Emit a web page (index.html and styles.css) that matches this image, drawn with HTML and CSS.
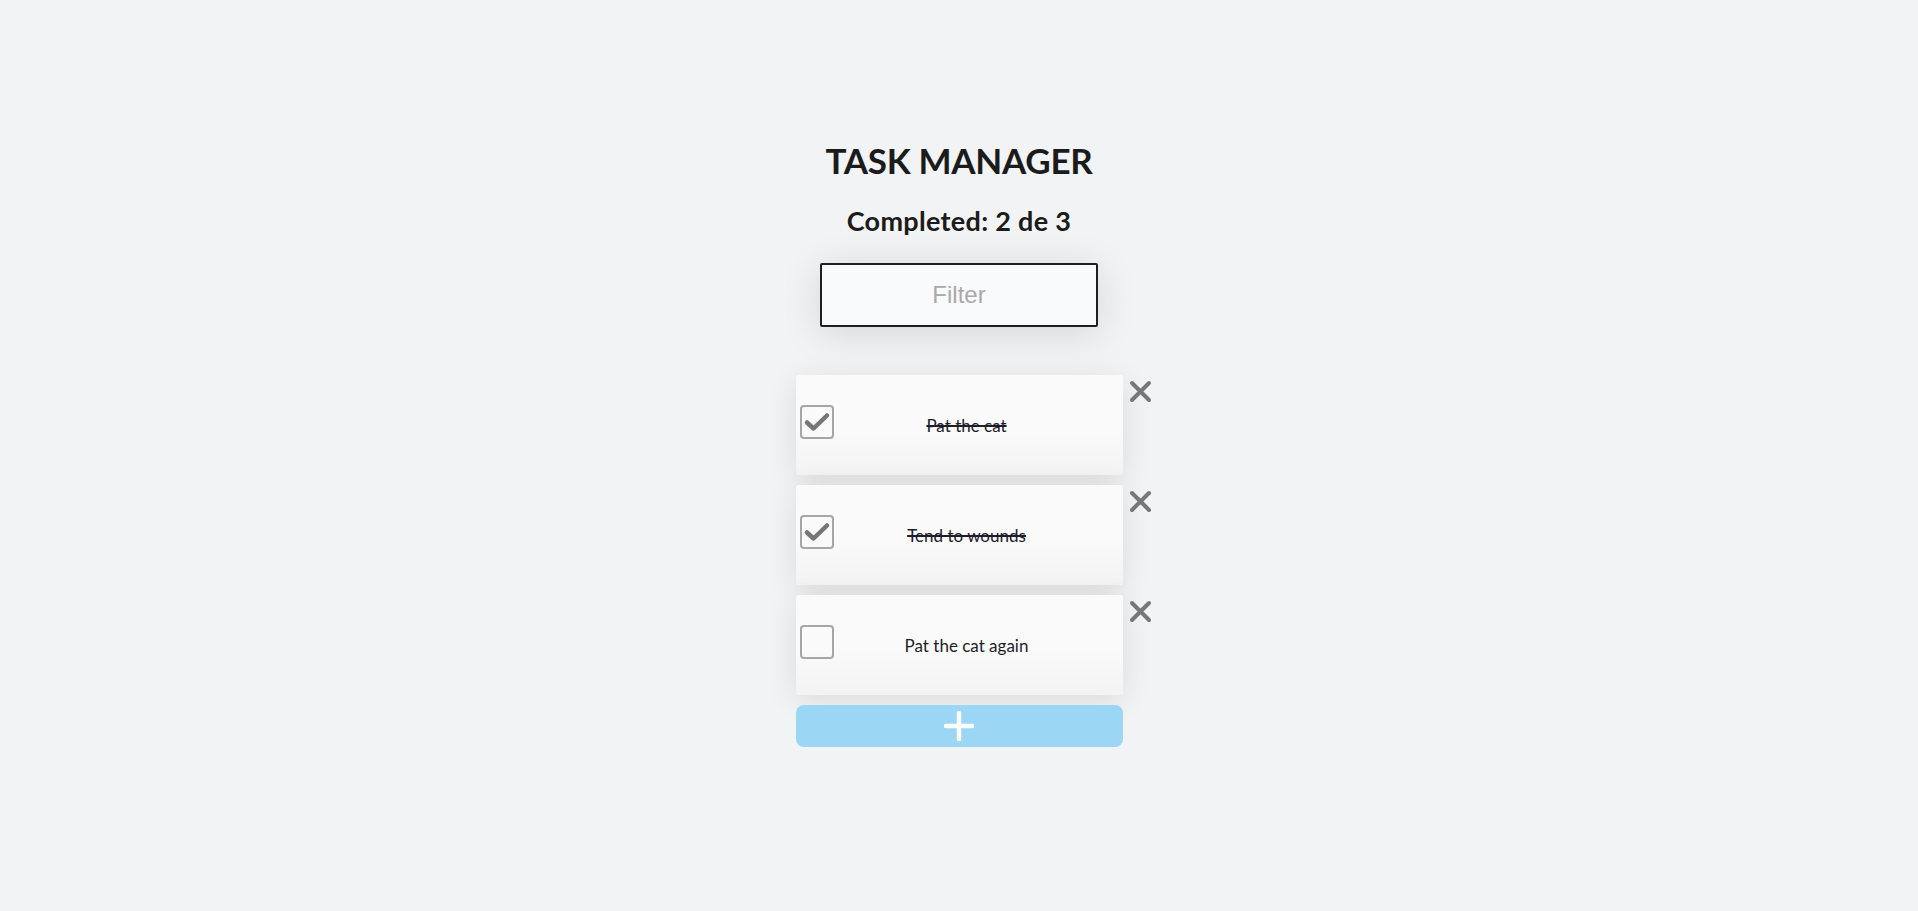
FILE: index.html
```html
<!DOCTYPE html>
<html lang="en">
<head>
<meta charset="utf-8">
<title>Task Manager</title>
<link rel="stylesheet" href="styles.css">
</head>
<body>
<main class="app">
  <h1 class="title">TASK MANAGER</h1>
  <h2 class="counter">Completed: 2 de 3</h2>
  <input class="filter" type="text" placeholder="Filter">
  <ul class="tasks">
    <li class="task-row">
      <div class="card done">
        <span class="check checked">
          <svg viewBox="0 0 30 30" width="30" height="30"><path d="M5 15.5 L11.5 21.5 L25 8.5" /></svg>
        </span>
        <span class="label">Pat the cat</span>
      </div>
      <button class="remove" aria-label="remove"><svg viewBox="0 0 23 23" width="23" height="23"><path d="M3 3 L20 20 M20 3 L3 20"/></svg></button>
    </li>
    <li class="task-row">
      <div class="card done">
        <span class="check checked">
          <svg viewBox="0 0 30 30" width="30" height="30"><path d="M5 15.5 L11.5 21.5 L25 8.5" /></svg>
        </span>
        <span class="label">Tend to wounds</span>
      </div>
      <button class="remove" aria-label="remove"><svg viewBox="0 0 23 23" width="23" height="23"><path d="M3 3 L20 20 M20 3 L3 20"/></svg></button>
    </li>
    <li class="task-row">
      <div class="card">
        <span class="check"></span>
        <span class="label">Pat the cat again</span>
      </div>
      <button class="remove" aria-label="remove"><svg viewBox="0 0 23 23" width="23" height="23"><path d="M3 3 L20 20 M20 3 L3 20"/></svg></button>
    </li>
  </ul>
  <button class="add" aria-label="add"><svg viewBox="0 0 30 30" width="30" height="30"><path d="M15 2 V28 M2 15 H28"/></svg></button>
</main>
</body>
</html>
```

FILE: styles.css
```css
html, body {
  margin: 0;
  padding: 0;
}
body {
  background: #f2f3f5;
  font-family: "Lato", "Noto Sans", sans-serif;
  color: #1a1a1a;
  min-height: 911px;
}
.app {
  display: flex;
  flex-direction: column;
  align-items: center;
  padding-top: 138px;
}
.title {
  margin: 0;
  font-size: 35px;
  line-height: 44px;
  font-weight: 700;
  color: #1b1b1b;
  letter-spacing: -0.3px;
}
.counter {
  margin: 23px 0 0;
  font-size: 27px;
  line-height: 32px;
  font-weight: 700;
  color: #1b1b1b;
  letter-spacing: 0.3px;
}
.filter {
  margin-top: 26px;
  box-sizing: border-box;
  width: 278px;
  height: 64px;
  border: 2px solid #1f1f1f;
  border-radius: 2px;
  background: #f8fafc;
  font-family: "Liberation Sans", Arial, sans-serif;
  font-size: 24px;
  text-align: center;
  outline: none;
  box-shadow: 0 6px 40px rgba(0, 0, 0, 0.12);
}
.filter::placeholder {
  color: #a9a9a9;
}
.tasks {
  list-style: none;
  margin: 48px 0 0;
  padding: 0;
  width: 327px;
  display: flex;
  flex-direction: column;
  gap: 10px;
}
.task-row {
  display: flex;
  align-items: flex-start;
}
.card {
  flex: 0 0 327px;
  height: 100px;
  box-sizing: border-box;
  display: grid;
  align-items: center;
  border-radius: 3px;
  background: linear-gradient(#fafafa 55%, #f3f3f3 100%);
  box-shadow: 0 6px 30px rgba(0, 0, 0, 0.10);
}
.check, .label {
  grid-area: 1 / 1;
}
.check {
  box-sizing: border-box;
  width: 34px;
  height: 34px;
  margin-left: 4px;
  margin-top: -7px;
  border: 2px solid #a6a6a6;
  border-radius: 4px;
  display: flex;
  align-items: center;
  justify-content: center;
  justify-self: start;
}
.check svg {
  display: block;
  width: 30px;
  height: 30px;
  fill: none;
  stroke: #767676;
  stroke-width: 4.5;
  stroke-linecap: round;
  stroke-linejoin: round;
}
.label {
  padding-left: 15px;
  text-align: center;
  font-size: 17px;
  color: #1d1d2b;
}
.done .label {
  text-decoration: line-through;
  text-decoration-thickness: 1.5px;
}
.remove {
  flex: 0 0 auto;
  margin: 5px -29px 0 6px;
  padding: 0;
  border: 0;
  background: none;
  width: 23px;
  height: 23px;
  cursor: pointer;
}
.remove svg {
  display: block;
  fill: none;
  stroke: #777;
  stroke-width: 4;
  stroke-linecap: round;
}
.add {
  margin-top: 10px;
  width: 327px;
  height: 42px;
  border: 0;
  border-radius: 8px;
  background: #9bd6f5;
  display: flex;
  align-items: center;
  justify-content: center;
  padding: 0;
  cursor: pointer;
}
.add svg {
  display: block;
  fill: none;
  stroke: #fff;
  stroke-width: 4.5;
  stroke-linecap: round;
}
```
